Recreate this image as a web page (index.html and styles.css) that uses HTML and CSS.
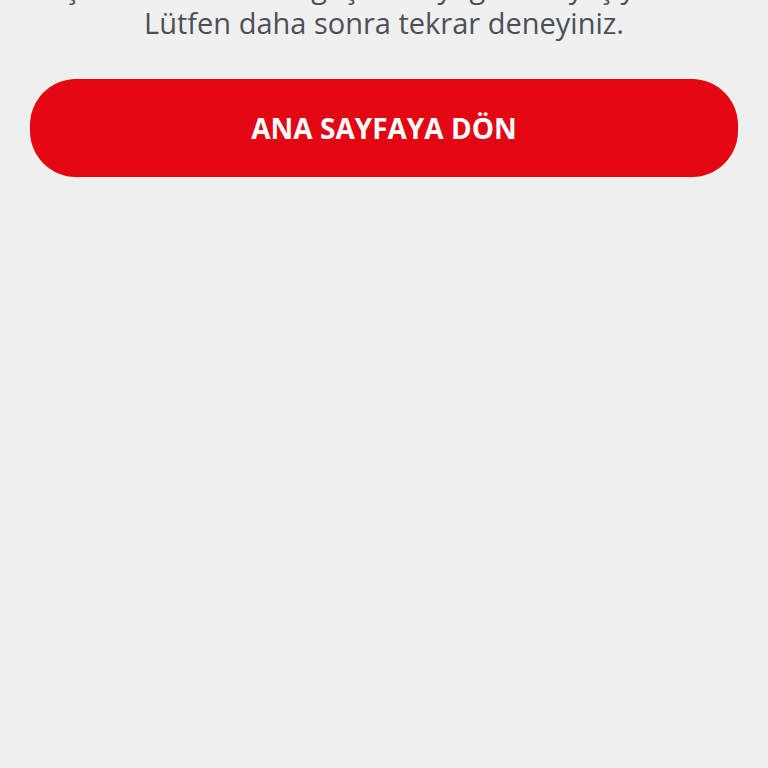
FILE: index.html
```html
<!DOCTYPE html>
<html lang="tr">
<head>
<meta charset="utf-8">
<link rel="stylesheet" href="styles.css">
</head>
<body>
<main class="page">
  <p class="message">Şu anda sistemde geçici bir yoğunluk yaşıyoruz.<br>Lütfen daha sonra tekrar deneyiniz.</p>
  <a class="home-btn" href="#">ANA SAYFAYA DÖN</a>
</main>
</body>
</html>
```
FILE: styles.css
```css
html, body {
  margin: 0;
  padding: 0;
  background: #f0f0f0;
  height: 100%;
  overflow: hidden;
}
.page {
  padding: 0 30px;
  display: flex;
  flex-direction: column;
}
.message {
  margin: -31px 0 0;
  font-family: "Open Sans", "Liberation Sans", sans-serif;
  font-size: 29px;
  line-height: 36px;
  color: #4b5057;
  text-align: center;
  white-space: nowrap;
  overflow: hidden;
}
.home-btn {
  margin-top: 38px;
  height: 98px;
  border-radius: 46px;
  background: #e30613;
  color: #fff;
  display: flex;
  align-items: center;
  justify-content: center;
  text-decoration: none;
  font-family: "Open Sans", "Liberation Sans", sans-serif;
  font-weight: 700;
  font-size: 28px;
}
```
